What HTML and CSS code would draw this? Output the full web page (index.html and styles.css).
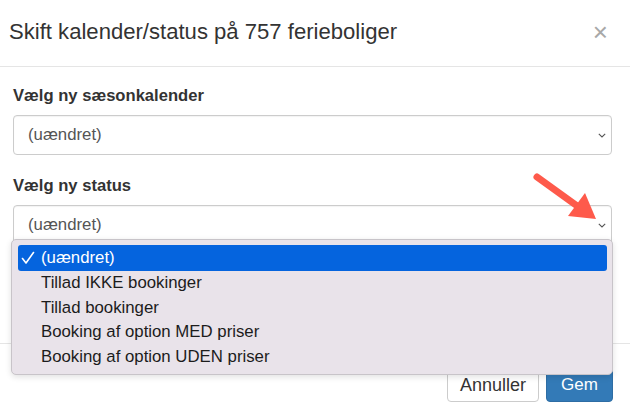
FILE: index.html
```html
<!DOCTYPE html>
<html lang="da">
<head>
<meta charset="utf-8">
<title>Skift kalender/status</title>
<link rel="stylesheet" href="styles.css">
</head>
<body>
<div class="modal">
  <div class="modal-header">
    <h4 class="modal-title">Skift kalender/status på 757 ferieboliger</h4>
    <span class="close">×</span>
  </div>
  <div class="modal-body">
    <div class="form-group">
      <label class="lbl">Vælg ny sæsonkalender</label>
      <div class="select"><span>(uændret)</span><svg class="chev" width="8" height="5" viewBox="0 0 8 5"><path d="M0.8 0.8 L4 4 L7.2 0.8" fill="none" stroke="#555" stroke-width="1.1"/></svg></div>
    </div>
    <div class="form-group">
      <label class="lbl">Vælg ny status</label>
      <div class="select"><span>(uændret)</span><svg class="chev" width="8" height="5" viewBox="0 0 8 5"><path d="M0.8 0.8 L4 4 L7.2 0.8" fill="none" stroke="#555" stroke-width="1.1"/></svg></div>
    </div>
  </div>
  <div class="modal-footer">
    <button class="btn btn-default">Annuller</button>
    <button class="btn btn-primary">Gem</button>
  </div>

  <ul class="dropdown">
    <li class="opt selected"><svg class="check" width="16" height="16" viewBox="0 0 16 16"><path d="M2.5 8.5 L6 13 L13.5 2.5" fill="none" stroke="#fff" stroke-width="1.6" stroke-linecap="round" stroke-linejoin="round"/></svg>(uændret)</li>
    <li class="opt">Tillad IKKE bookinger</li>
    <li class="opt">Tillad bookinger</li>
    <li class="opt">Booking af option MED priser</li>
    <li class="opt">Booking af option UDEN priser</li>
  </ul>

  <svg class="arrow" width="90" height="60" viewBox="0 0 90 60">
    <line x1="12" y1="12" x2="55" y2="43" stroke="#fe5a4b" stroke-width="7" stroke-linecap="round"/>
    <polygon points="43,51 60,28 71,54" fill="#fe5a4b"/>
  </svg>
</div>
</body>
</html>
```
FILE: styles.css
```css
* { box-sizing: border-box; }
html, body {
  margin: 0;
  padding: 0;
  background: #fff;
}
body {
  font-family: "Liberation Sans", Arial, "Helvetica Neue", sans-serif;
  color: #333;
  width: 630px;
  height: 411px;
  overflow: hidden;
}
.modal {
  position: relative;
  width: 630px;
  height: 411px;
}
.modal-header {
  height: 67px;
  border-bottom: 1px solid #e5e5e5;
  display: flex;
  align-items: center;
  justify-content: space-between;
  padding: 0 22px 2px 9px;
}
.modal-title {
  margin: 0;
  font-size: 22.1px;
  font-weight: normal;
  color: #333;
}
.close {
  font-size: 26px;
  color: #a8a8a8;
  line-height: 1;
}
.modal-body {
  padding: 19px 18px 0 13px;
  height: 276px;
}
.form-group {
  display: flex;
  flex-direction: column;
  margin-bottom: 21px;
}
.lbl {
  font-size: 16.6px;
  font-weight: bold;
  line-height: 20px;
  margin-bottom: 9px;
  color: #333;
}
.select {
  height: 40px;
  border: 1px solid #ccc;
  border-radius: 4px;
  display: flex;
  align-items: center;
  justify-content: space-between;
  padding: 0 5px 0 14px;
  font-size: 16.8px;
  color: #555;
  box-shadow: inset 0 1px 1px rgba(0,0,0,0.05);
}
.chev { margin-top: 1px; }
.modal-footer {
  border-top: 1px solid #e5e5e5;
  display: flex;
  justify-content: flex-end;
  gap: 7px;
  padding: 24px 17px 0 0;
}
.btn {
  height: 34px;
  font-family: inherit;
  font-size: 18px;
  border-radius: 4px;
  border: 1px solid #ccc;
  padding: 0;
}
.btn-default {
  background: #fff;
  color: #333;
  width: 92px;
}
.btn-primary {
  background: #337ab7;
  border-color: #2e6da4;
  color: #fff;
  width: 67px;
  font-size: 17px;
}
.dropdown {
  position: absolute;
  left: 11px;
  top: 239px;
  width: 602px;
  height: 136px;
  margin: 0;
  padding: 5px 5px 0 6px;
  list-style: none;
  background: #e9e3ea;
  border: 1px solid #c8c4c9;
  border-radius: 5px;
  box-shadow: 0 2px 6px rgba(0,0,0,0.12);
}
.opt {
  position: relative;
  height: 24.5px;
  line-height: 24.5px;
  padding-left: 23px;
  font-size: 16.8px;
  color: #1c1c1c;
}
.opt.selected {
  height: 26px;
  line-height: 26px;
  background: #0564de;
  color: #fff;
  border-radius: 3px;
}
.check {
  position: absolute;
  left: 2px;
  top: 5px;
}
.arrow {
  position: absolute;
  left: 525px;
  top: 165px;
}
```
